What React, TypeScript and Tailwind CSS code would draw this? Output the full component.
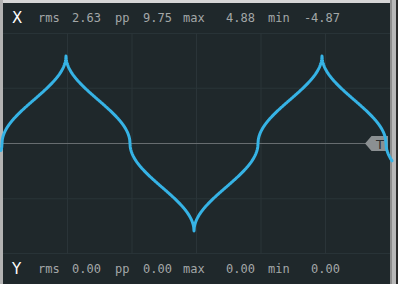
import React from "react";

const W = 387;
const H = 221;
const CY = 110.5;
const A = 87.5;
const PERIOD = 256;

function waveY(x: number): number {
  const p = ((((x + 1) % PERIOD) + PERIOD) % PERIOD) / PERIOD;
  const q = p * 4;
  let u: number;
  let sign = 1;
  if (q < 1) u = q;
  else if (q < 2) u = 2 - q;
  else if (q < 3) {
    u = q - 2;
    sign = -1;
  } else {
    u = 4 - q;
    sign = -1;
  }
  const v = (A * Math.acos(1 - 2 * u)) / Math.PI;
  return CY - sign * v;
}

function buildPath(): string {
  const pts: string[] = [];
  for (let x = -2; x <= W + 2; x += 0.25) {
    pts.push(`${x.toFixed(2)},${waveY(x).toFixed(2)}`);
  }
  return "M" + pts.join(" L");
}

const mono = { fontFamily: '"DejaVu Sans Mono", monospace' };

function Row({ ch, vals }: { ch: string; vals: [string, string, string, string] }) {
  return (
    <div className="flex h-[30px] items-center text-[12px] text-[#a3a7a8]" style={mono}>
      <span className="ml-[9px] w-[26px] text-[15px] text-white" style={{ fontFamily: '"DejaVu Sans", sans-serif' }}>
        {ch}
      </span>
      <span className="flex w-[63px] justify-between">
        <span>rms</span>
        <span>{vals[0]}</span>
      </span>
      <span className="ml-[14px] flex w-[57px] justify-between">
        <span>pp</span>
        <span>{vals[1]}</span>
      </span>
      <span className="ml-[11px] flex w-[72px] justify-between">
        <span>max</span>
        <span>{vals[2]}</span>
      </span>
      <span className="ml-[13px] flex w-[72px] justify-between">
        <span>min</span>
        <span>{vals[3]}</span>
      </span>
    </div>
  );
}

export default function App() {
  const d = buildPath();
  const vx = [1, 2, 3, 4, 5].map((i) => (W / 6) * i);
  const hy = [1, 3].map((i) => (H / 4) * i);
  return (
    <div className="flex h-[284px] w-[398px] bg-[#1f282b]">
      <div className="w-[3px] bg-[#b3b3b3]" />
      <div className="flex w-[387px] flex-col">
        <div className="h-[3px] bg-[#d6d6d6]" />
        <Row ch="X" vals={["2.63", "9.75", "4.88", "-4.87"]} />
        <div className="relative h-[221px] border-t border-[#283337]">
          <svg width={W} height={H} className="absolute left-0 top-[-1px] overflow-visible">
            {vx.map((x) => (
              <line key={x} x1={x} y1={0} x2={x} y2={H} stroke="#2a3438" strokeWidth={1} />
            ))}
            {hy.map((y) => (
              <line key={y} x1={0} y1={y} x2={W} y2={y} stroke="#2a3438" strokeWidth={1} />
            ))}
            <line x1={0} y1={110.5} x2={364} y2={110.5} stroke="#676d70" strokeWidth={1} />
            <polygon points="362,110.5 368.5,103 385,103 385,118 368.5,118" fill="#8b9092" />
            <text x={377} y={115.5} textAnchor="middle" fontSize={13} fill="#2a2f31" style={{ fontFamily: '"DejaVu Sans", sans-serif' }}>
              T
            </text>
            <path d={d} fill="none" stroke="#36b3e5" strokeWidth={3} strokeLinejoin="round" strokeLinecap="round" />
          </svg>
        </div>
        <div className="border-t border-[#283337]">
          <Row ch="Y" vals={["0.00", "0.00", "0.00", "0.00"]} />
        </div>
      </div>
      <div className="w-[2px] bg-[#8e8e8e]" />
      <div className="w-[4px] bg-[#b8b8b8]" />
      <div className="w-[2px] bg-[#2a2a2a]" />
    </div>
  );
}
